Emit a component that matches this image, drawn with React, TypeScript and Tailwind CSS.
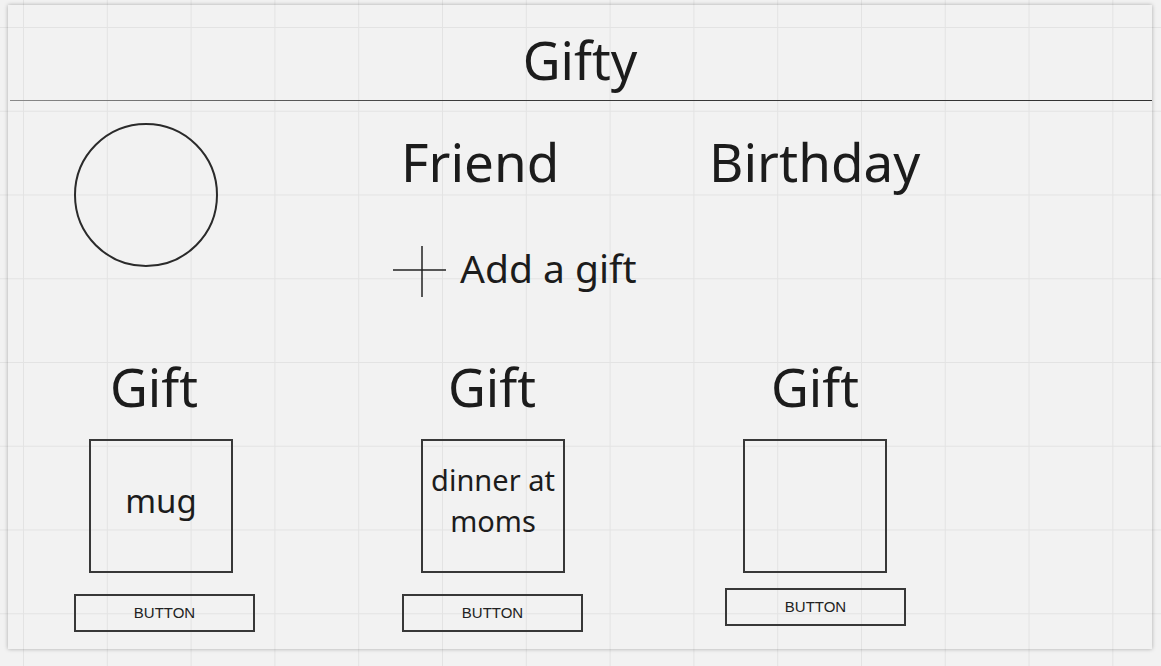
import React from 'react';

const font = { fontFamily: '"Noto Sans", "Open Sans", sans-serif' };

const Btn: React.FC<{ top: string }> = ({ top }) => (
  <div
    className={`${top} w-[181px] h-[38px] border-2 border-[#383838] flex items-center justify-center text-[15px] text-[#222] font-['Liberation_Sans',Arial,sans-serif]`}
  >
    BUTTON
  </div>
);

export default function App() {
  return (
    <div
      style={font}
      className="w-[1161px] h-[666px] overflow-hidden bg-[#f2f2f2] bg-[linear-gradient(to_right,#e3e3e3_1px,transparent_1px),linear-gradient(to_bottom,#e3e3e3_1px,transparent_1px)] bg-[size:83.8px_83.75px] bg-[position:23px_27px] pl-[8px] pt-[5px] text-[#1c1c1c]"
    >
      <div className="w-[1144px] h-[644px] shadow-[0_0_4px_rgba(0,0,0,0.3)] flex flex-col">
        {/* header */}
        <div className="pt-[29px] text-[52px] leading-none text-center">Gifty</div>
        <div className="mt-[14px] ml-[2px] h-px bg-[linear-gradient(to_right,#8a8a8a,#3a3a3a_40%,#333)]" />

        {/* friend row */}
        <div className="flex mt-[22px]">
          <div className="ml-[66px] w-[144px] h-[144px] rounded-full border-2 border-[#2a2a2a] shrink-0" />
          <div className="ml-[175px] flex flex-col">
            <div className="flex mt-[12px] ml-[8px] text-[53px] leading-none">
              <span className="w-[308px]">Friend</span>
              <span>Birthday</span>
            </div>
            <div className="flex mt-[58px]">
              <svg width="53" height="51" viewBox="0 0 53 51" className="shrink-0">
                <line x1="0" y1="24" x2="53" y2="24" stroke="#222" strokeWidth="1.5" />
                <line x1="29" y1="0" x2="29" y2="51" stroke="#222" strokeWidth="1.5" />
              </svg>
              <span className="ml-[14px] mt-[2px] text-[39px] leading-none">Add a gift</span>
            </div>
          </div>
        </div>

        {/* gifts */}
        <div className="flex mt-[64px]">
          <div className="ml-[66px] w-[181px] flex flex-col">
            <span className="ml-[36px] text-[52px] leading-none">Gift</span>
            <div className="mt-[26px] ml-[15px] w-[144px] h-[134px] border-2 border-[#383838] flex items-center justify-center pb-[10px] text-[33px]">
              mug
            </div>
            <Btn top="mt-[21px]" />
          </div>
          <div className="ml-[147px] w-[181px] flex flex-col">
            <span className="ml-[46px] text-[52px] leading-none">Gift</span>
            <div className="mt-[26px] ml-[19px] w-[144px] h-[134px] border-2 border-[#383838] flex items-center justify-center pb-[12px] text-[29px] leading-[41px] text-center">
              dinner at<br />moms
            </div>
            <Btn top="mt-[21px]" />
          </div>
          <div className="ml-[142px] w-[181px] flex flex-col">
            <span className="ml-[46px] text-[52px] leading-none">Gift</span>
            <div className="mt-[26px] ml-[18px] w-[144px] h-[134px] border-2 border-[#383838]" />
            <Btn top="mt-[15px]" />
          </div>
        </div>
      </div>
    </div>
  );
}
